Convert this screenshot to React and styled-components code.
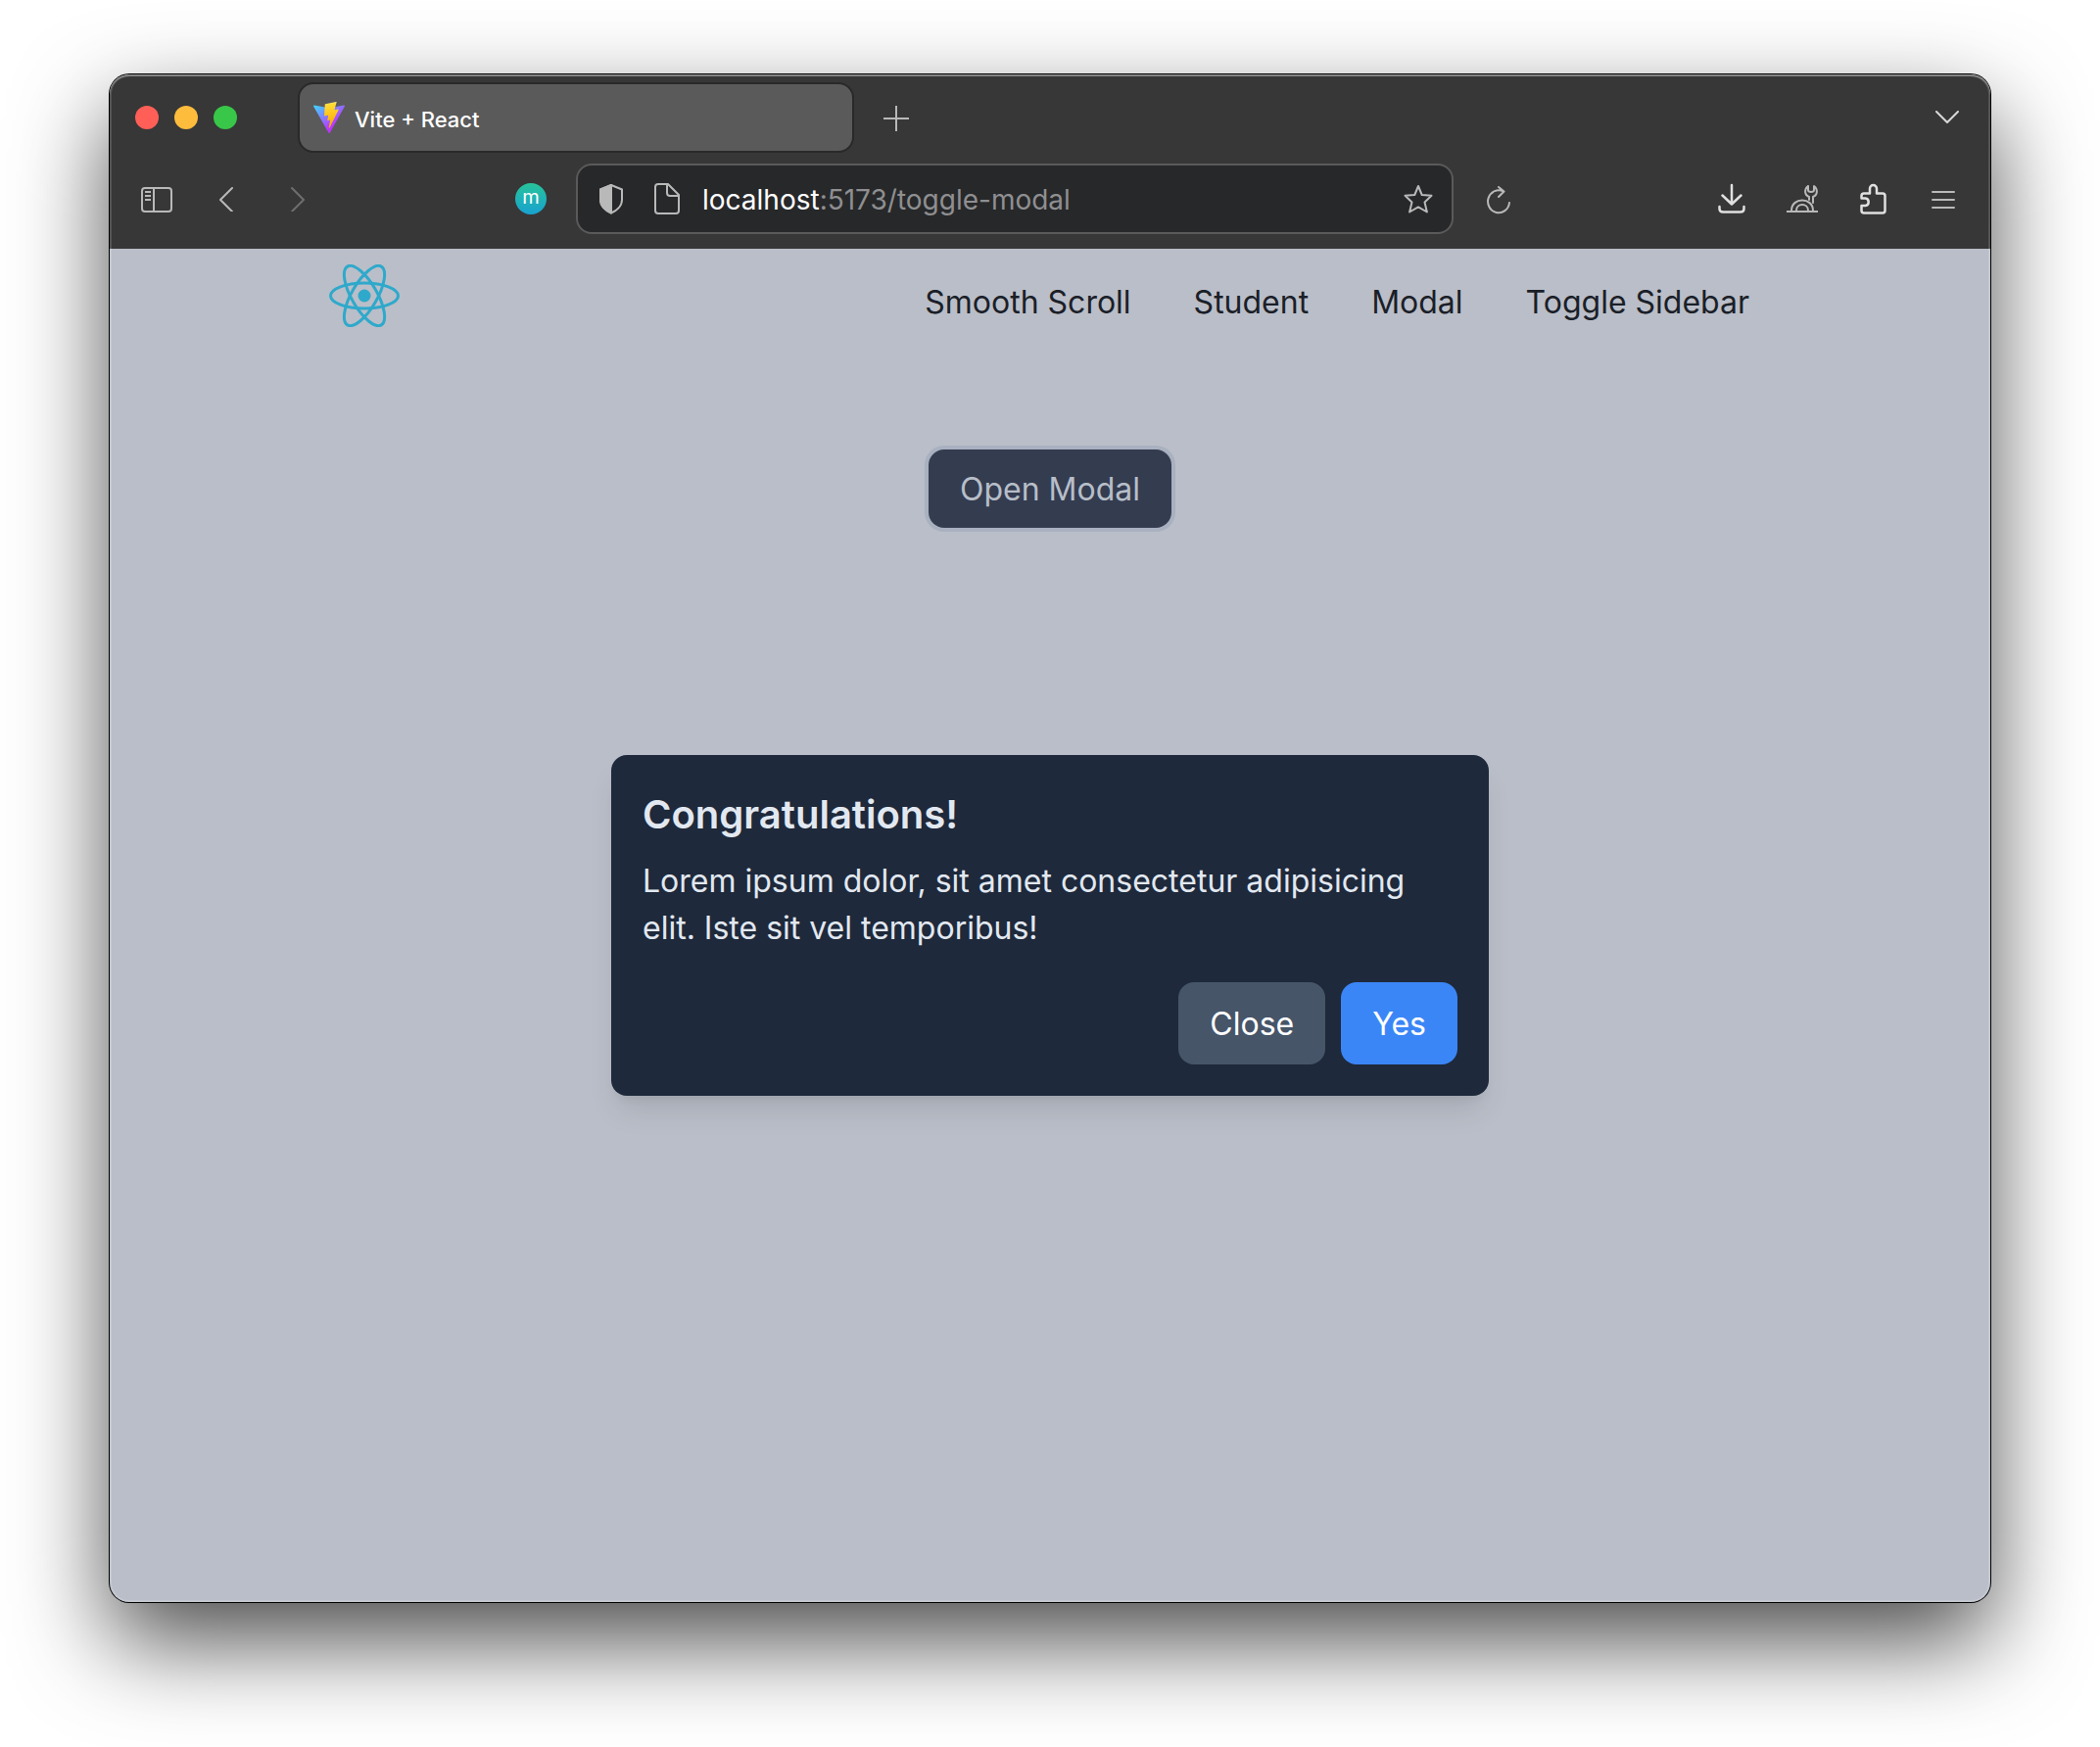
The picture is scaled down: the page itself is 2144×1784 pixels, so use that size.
import React, { useState } from "react";
import styled, { createGlobalStyle } from "styled-components";

const GlobalStyle = createGlobalStyle`
  *, *::before, *::after { box-sizing: border-box; }
  body { margin: 0; background: #ffffff; font-family: Inter, "Noto Sans", sans-serif; }
  button { font: inherit; border: 0; padding: 0; cursor: pointer; }
  svg { display: block; }
`;

const Desktop = styled.div`
  min-height: 100vh;
  padding: 76px 112px 148px;
  display: flex;
  overflow: hidden;
`;

const Window = styled.div`
  flex: 1;
  min-width: 0;
  display: flex;
  flex-direction: column;
  position: relative;
  border-radius: 20px;
  background: #babec8;
  box-shadow: 0 0 0 1px #000000, 0 40px 96px rgba(0, 0, 0, 0.7);

  &::after {
    content: "";
    position: absolute;
    inset: 0;
    border-radius: 20px;
    box-shadow: inset 0 2px 1px rgba(255, 255, 255, 0.3), inset 0 0 0 2px rgba(255, 255, 255, 0.14);
    pointer-events: none;
  }
`;

const Chrome = styled.header`
  background: #373737;
  border-radius: 20px 20px 0 0;
`;

const TabStrip = styled.div`
  height: 88px;
  padding: 8px 32px 8px 26px;
  display: flex;
  align-items: center;
`;

const TrafficLights = styled.div`
  display: flex;
  gap: 16px;
  margin-right: 62px;
`;

const Light = styled.button`
  width: 24px;
  height: 24px;
  border-radius: 50%;
  background: ${(p) => p.$color};
`;

const Tab = styled.button`
  width: 568px;
  height: 72px;
  padding: 0 14px;
  display: flex;
  align-items: center;
  gap: 10px;
  border: 2px solid #292929;
  border-radius: 16px;
  background: #5a5a5a;
  color: #ffffff;
  font-size: 22px;
  font-weight: 500;
  line-height: 32px;
`;

const TabTitle = styled.span`
  padding-top: 3px;
`;

const IconButton = styled.button`
  flex: none;
  width: ${(p) => p.$width || 32}px;
  height: 32px;
  display: grid;
  place-items: center;
  background: transparent;
  color: ${(p) => p.$color || "#b9b9b9"};
`;

const Spacer = styled.div`
  flex: 1;
`;

const Toolbar = styled.div`
  height: 90px;
  padding: 3px 32px 15px;
  display: flex;
  align-items: center;
`;

const SideTools = styled.div`
  flex: ${(p) => (p.$end ? 43 : 37)} 1 0;
  min-width: 0;
  display: flex;
  align-items: center;
  justify-content: ${(p) => (p.$end ? "flex-end" : "flex-start")};
  gap: 40px;
`;

const ToolGap = styled.div`
  margin-left: auto;
  margin-right: 30px;
`;

const Account = styled.button`
  display: block;
  width: 32px;
  height: 32px;
  border-radius: 50%;
  background: linear-gradient(#27c39a, #18a2d0);
  color: #ffffff;
  font-size: 20px;
  line-height: 28px;
  padding-bottom: 4px;
`;

const AddressBar = styled.form`
  width: 896px;
  height: 72px;
  padding: 0 18px;
  display: flex;
  align-items: center;
  border: 2px solid #5a5a5a;
  border-radius: 16px;
  background: #27282a;
`;

const Address = styled.a`
  flex: 1;
  margin-left: 20px;
  padding-top: 2px;
  color: #8f8f91;
  font-size: 28px;
  line-height: 40px;
  text-decoration: none;
`;

const Host = styled.span`
  color: #ffffff;
`;

const AddressTools = styled.div`
  display: flex;
  gap: 25px;
`;

const Reload = styled.div`
  margin-right: auto;
  margin-left: 30px;
`;

const Page = styled.main`
  flex: 1;
  position: relative;
  color: #1b1f28;
  font-size: 32px;
  line-height: 48px;
`;

const Nav = styled.nav`
  max-width: 1536px;
  margin: 0 auto;
  padding: 16px 54px 16px 32px;
  display: flex;
  justify-content: space-between;
  align-items: flex-start;
`;

const NavLinks = styled.ul`
  margin: 0;
  padding: 15px 0 0;
  display: flex;
  gap: 64px;
  list-style: none;
`;

const NavLink = styled.a`
  display: block;
  color: inherit;
  text-decoration: none;
  line-height: 48px;
`;

const Stage = styled.section`
  padding-top: 109px;
  display: flex;
  justify-content: center;
`;

const OpenButton = styled.button`
  height: 80px;
  padding: 2px 32px 0;
  border-radius: 16px;
  background: #343c50;
  box-shadow: 0 0 0 4px #a9b1c0;
  color: #b7bec8;
`;

const Backdrop = styled.div`
  position: absolute;
  inset: 0;
  display: grid;
  place-items: center;
`;

const Modal = styled.div`
  width: 896px;
  padding: 33px 32px 32px;
  border-radius: 16px;
  background: #1e293b;
  color: #e2e8f0;
  box-shadow: 0 20px 30px -6px rgba(0, 0, 0, 0.1), 0 8px 12px -8px rgba(0, 0, 0, 0.1);
`;

const ModalTitle = styled.h2`
  margin: 0 0 16px;
  font-size: 40px;
  font-weight: 600;
  line-height: 56px;
`;

const ModalText = styled.p`
  margin: 0 0 31px;
`;

const ModalActions = styled.div`
  display: flex;
  justify-content: flex-end;
  gap: 16px;
`;

const ActionButton = styled.button`
  height: 84px;
  padding: 2px 32px 0;
  border-radius: 16px;
  background: ${(p) => (p.$primary ? "#3b86f6" : "#475569")};
  color: #ffffff;
`;

const Svg = ({ w, h, sw = 2, children }) => (
  <svg width={w} height={h} viewBox={`0 0 ${w} ${h}`} fill="none" stroke="currentColor"
    strokeWidth={sw} strokeLinecap="round" strokeLinejoin="round" aria-hidden="true">
    {children}
  </svg>
);

const ViteLogo = () => (
  <svg width="32" height="32" viewBox="0 0 256 257" aria-hidden="true">
    <defs>
      <linearGradient id="viteBody" x1="-.828%" x2="57.636%" y1="7.652%" y2="78.411%">
        <stop offset="0%" stopColor="#41D1FF" />
        <stop offset="100%" stopColor="#BD34FE" />
      </linearGradient>
      <linearGradient id="viteBolt" x1="43.376%" x2="50.316%" y1="2.242%" y2="89.03%">
        <stop offset="0%" stopColor="#FFEA83" />
        <stop offset="8.333%" stopColor="#FFDD35" />
        <stop offset="100%" stopColor="#FFA800" />
      </linearGradient>
    </defs>
    <path fill="url(#viteBody)" d="M255.153 37.938 134.897 252.976c-2.483 4.44-8.862 4.466-11.382.048L.875 37.958c-2.746-4.814 1.371-10.646 6.827-9.67l120.385 21.517a6.537 6.537 0 0 0 2.322-.004l117.867-21.483c5.438-.991 9.574 4.796 6.877 9.62Z" />
    <path fill="url(#viteBolt)" d="M185.432.063 96.44 17.501a3.268 3.268 0 0 0-2.634 3.014l-5.474 92.456a3.268 3.268 0 0 0 3.997 3.378l24.777-5.718c2.318-.535 4.413 1.507 3.936 3.838l-7.361 36.047c-.495 2.426 1.782 4.5 4.151 3.78l15.304-4.649c2.372-.72 4.652 1.36 4.15 3.788l-11.698 56.621c-.732 3.542 3.979 5.473 5.943 2.437l1.313-2.028 72.516-144.72c1.215-2.423-.88-5.186-3.54-4.672l-25.505 4.922c-2.396.462-4.435-1.77-3.759-4.114l16.646-57.705c.677-2.35-1.37-4.583-3.769-4.113Z" />
  </svg>
);

const ReactLogo = () => (
  <svg width="72" height="64" viewBox="0 0 72 64" fill="none" stroke="#2fa9cb" strokeWidth="3" aria-label="React">
    <circle cx="36" cy="32" r="6.5" fill="#2fa9cb" stroke="none" />
    <ellipse cx="36" cy="32" rx="34.5" ry="13" />
    <ellipse cx="36" cy="32" rx="34.5" ry="13" transform="rotate(60 36 32)" />
    <ellipse cx="36" cy="32" rx="34.5" ry="13" transform="rotate(120 36 32)" />
  </svg>
);

const links = ["Smooth Scroll", "Student", "Modal", "Toggle Sidebar"];

export default function App() {
  const [open, setOpen] = useState(true);
  return (
    <>
      <GlobalStyle />
      <Desktop>
        <Window>
          <Chrome>
            <TabStrip>
              <TrafficLights>
                <Light $color="#ff5f57" aria-label="Close window" />
                <Light $color="#febc3c" aria-label="Minimize window" />
                <Light $color="#38c748" aria-label="Zoom window" />
              </TrafficLights>
              <Tab>
                <ViteLogo />
                <TabTitle>Vite + React</TabTitle>
              </Tab>
              <IconButton $width={86} aria-label="New tab">
                <Svg w={26} h={28}><path strokeLinecap="butt" d="M13 2V28M0 15H26" /></Svg>
              </IconButton>
              <Spacer />
              <IconButton $width={24} $color="#d8d8d8" aria-label="List all tabs">
                <Svg w={24} h={14}><path d="M1 1L12 12L23 1" /></Svg>
              </IconButton>
            </TabStrip>
            <Toolbar>
              <SideTools>
                <IconButton aria-label="Sidebar">
                  <Svg w={32} h={28}>
                    <rect x="1" y="3" width="30" height="24" rx="3" />
                    <path strokeLinecap="butt" d="M13 3V27M4 7H10M4 11H10M4 15H10" />
                  </Svg>
                </IconButton>
                <IconButton aria-label="Back">
                  <Svg w={16} h={26}><path d="M13 2L1 14L13 26" /></Svg>
                </IconButton>
                <IconButton $color="#6e6e6e" aria-label="Forward">
                  <Svg w={14} h={26}><path d="M1 2L13 14L1 26" /></Svg>
                </IconButton>
                <ToolGap>
                  <Account aria-label="Account">m</Account>
                </ToolGap>
              </SideTools>
              <AddressBar onSubmit={(e) => e.preventDefault()}>
                <AddressTools>
                  <IconButton type="button" aria-label="Tracking protection">
                    <Svg w={24} h={32}>
                      <path d="M12 2L23 6.500V17C23 23 18 28 12 30.500C6 28 1 23 1 17V6.500Z" />
                      <path fill="currentColor" d="M12 2V30.500C6 28 1 23 1 17V6.500Z" />
                    </Svg>
                  </IconButton>
                  <IconButton type="button" aria-label="Site information">
                    <Svg w={26} h={32}>
                      <path d="M4 1H14L25 12V28Q25 31 22 31H4Q1 31 1 28V4Q1 1 4 1Z" />
                      <path d="M13 1V10Q13 13 16 13H25" />
                    </Svg>
                  </IconButton>
                </AddressTools>
                <Address href="#modal"><Host>localhost</Host>:5173/toggle-modal</Address>
                <IconButton type="button" aria-label="Bookmark">
                  <Svg w={30} h={30}>
                    <path d="M15 2L18.700 11L28.500 11.800L21.500 18.400L23.900 28.500L15 23.400L6.100 28.500L8.500 18.400L1.500 11.800L11.300 11Z" />
                  </Svg>
                </IconButton>
              </AddressBar>
              <SideTools $end>
                <Reload>
                  <IconButton aria-label="Reload">
                    <Svg w={26} h={32}>
                      <path d="M24 20A11 11.500 0 1 1 18 8.500M13 4L18.500 8.500L13 14" />
                    </Svg>
                  </IconButton>
                </Reload>
                <IconButton $color="#e0e0e0" aria-label="Downloads">
                  <Svg w={28} h={32}>
                    <path strokeWidth="2.5" d="M14 2V21M4.500 12.500L14 21.500L23.500 12.500M1.500 24V26Q1.500 29.500 5 29.500H23Q26.500 29.500 26.500 26V24" />
                  </Svg>
                </IconButton>
                <IconButton aria-label="Developer tools">
                  <Svg w={32} h={32}>
                    <path strokeLinecap="butt" d="M0 29H32" />
                    <path d="M5 28C5 14 27 14 27 28M10 28C10 20 22 20 22 28" />
                    <path d="M22 3C18 6 18 12 23 14V17M27 20V14C32 12 32 6 28 3V7Q28 9 25 9Q22 9 22 7V3" />
                  </Svg>
                </IconButton>
                <IconButton $color="#e0e0e0" aria-label="Extensions">
                  <Svg w={28} h={32}>
                    <path strokeWidth="2.5" d="M5 10.500H11V5.500A3.500 3.500 0 0 1 18 5.500V10.500H24Q26.500 10.500 26.500 13V28Q26.500 30.500 24 30.500H5Q2.500 30.500 2.500 28V23H6.500A3.800 3.800 0 0 0 6.500 15.500H2.500V13Q2.500 10.500 5 10.500Z" />
                  </Svg>
                </IconButton>
                <IconButton aria-label="Menu">
                  <Svg w={24} h={20}><path d="M1 3H23M1 11H23M1 19H23" /></Svg>
                </IconButton>
              </SideTools>
            </Toolbar>
          </Chrome>
          <Page>
            <Nav>
              <ReactLogo />
              <NavLinks>
                {links.map((label) => (
                  <li key={label}><NavLink href="#modal">{label}</NavLink></li>
                ))}
              </NavLinks>
            </Nav>
            <Stage>
              <OpenButton onClick={() => setOpen(true)}>Open Modal</OpenButton>
            </Stage>
            {open && (
              <Backdrop>
                <Modal role="dialog" aria-labelledby="modal-title">
                  <ModalTitle id="modal-title">Congratulations!</ModalTitle>
                  <ModalText>
                    Lorem ipsum dolor, sit amet consectetur adipisicing elit. Iste sit vel temporibus!
                  </ModalText>
                  <ModalActions>
                    <ActionButton onClick={() => setOpen(false)}>Close</ActionButton>
                    <ActionButton $primary onClick={() => setOpen(false)}>Yes</ActionButton>
                  </ModalActions>
                </Modal>
              </Backdrop>
            )}
          </Page>
        </Window>
      </Desktop>
    </>
  );
}
